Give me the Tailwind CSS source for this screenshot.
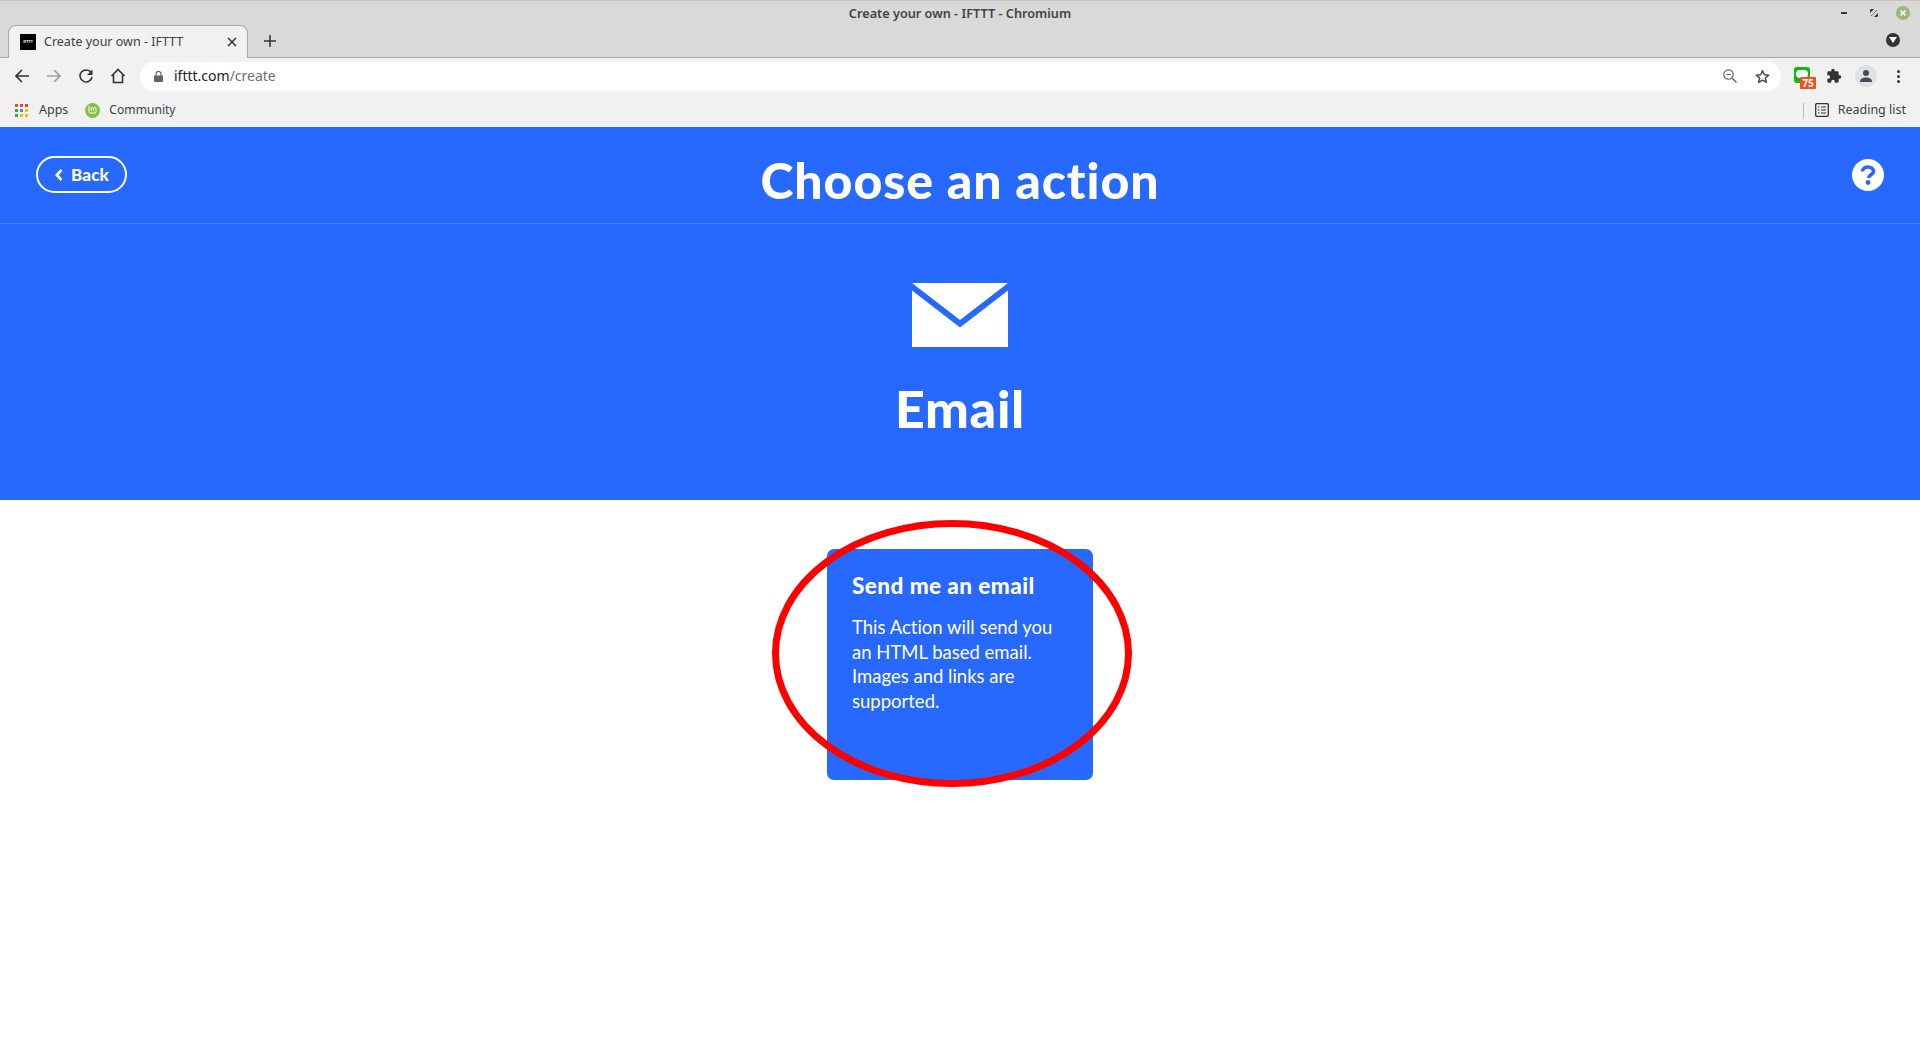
<!DOCTYPE html>
<html><head><meta charset="utf-8"><title>Create your own - IFTTT</title>
<script src="https://cdn.jsdelivr.net/npm/@tailwindcss/browser@4"></script></head>
<body class="bg-white overflow-hidden font-['Noto_Sans',sans-serif]">
<div class="h-[1039px] w-[1920px] flex flex-col relative">
  <!-- title + tabs -->
  <div class="h-[58px] bg-[#d9d9d9] border-t border-[#c4c4c4] border-b border-b-[#a8a8a8] relative flex flex-col shrink-0">
    <div class="h-[23px] pt-[3px] flex items-center justify-center text-[12.700px] font-semibold text-[#444] relative">Create your own - IFTTT - Chromium
      <div class="absolute right-[9px] top-[5px] flex items-center gap-[19px]">
        <div class="w-[6px] h-[2px] bg-[#333] mr-[4px]"></div>
        <svg width="8" height="8" viewBox="0 0 8 8"><path d="M0 4L4 0H1L0 1ZM8 4L4 8H7L8 7Z" fill="#333"/><path d="M1 7L7 1" stroke="#333" stroke-width=".6"/></svg>
        <svg class="-ml-[1px] mr-[1px]" width="14" height="14" viewBox="0 0 14 14"><circle cx="7" cy="7" r="7" fill="#9ab87a"/><path d="M4.500 4.500L9.500 9.500M9.500 4.500L4.500 9.500" stroke="#fff" stroke-width="1.600"/></svg>
      </div>
    </div>
    <div class="flex items-end h-[34px] pl-[8px]">
      <div class="w-[240px] h-[33px] -mb-px bg-[#f1f1f1] border border-b-0 border-[#a8a8a8] rounded-t-[8px] flex items-center pl-[11px] pr-[10px] text-[12.500px] text-[#3c4043]">
        <div class="w-[16px] h-[16px] bg-black flex items-center justify-center mr-[8px]"><span class="text-white text-[3.500px] font-bold leading-none">IFTTT</span></div>
        <span class="flex-1">Create your own - IFTTT</span>
        <svg width="10" height="10" viewBox="0 0 10 10"><path d="M1 1L9 9M9 1L1 9" stroke="#333" stroke-width="1.500"/></svg>
      </div>
      <svg class="ml-[16px] mb-[10px]" width="12" height="12" viewBox="0 0 12 12"><path d="M6 0V12M0 6H12" stroke="#333" stroke-width="1.500"/></svg>
      <div class="ml-auto mr-[20px] mb-[10px] w-[14px] h-[14px] rounded-full bg-[#333] flex items-center justify-center"><svg width="8" height="6" viewBox="0 0 8 6"><path d="M0 0H8L4 6Z" fill="#fff"/></svg></div>
    </div>
  </div>
  <!-- toolbar -->
  <div class="h-[37px] pb-[1px] bg-[#f1f1f1] flex items-center shrink-0 pl-[15px] pr-[14px]">
    <svg width="14" height="14" viewBox="0 0 14 14"><path d="M14 7H1.500M7 1L1 7L7 13" fill="none" stroke="#333" stroke-width="1.600"/></svg>
    <svg class="ml-[18px]" width="14" height="14" viewBox="0 0 14 14"><path d="M0 7H12.500M7 1L13 7L7 13" fill="none" stroke="#a0a0a0" stroke-width="1.600"/></svg>
    <svg class="ml-[18px]" width="14" height="14" viewBox="0 0 14 14"><path d="M12 3.500A6 6 0 1 0 13 8" fill="none" stroke="#333" stroke-width="1.600"/><path d="M13.500 0.500V6H8Z" fill="#333"/></svg>
    <svg class="ml-[17px]" width="16" height="16" viewBox="0 0 16 16"><path d="M1.500 8L8 1.500L14.500 8M3.500 7V14.500H12.500V7" fill="none" stroke="#333" stroke-width="1.600"/></svg>
    <div class="ml-[14px] w-[1641px] h-[29px] bg-white rounded-full flex items-center pl-[14px] pr-[11px] shrink-0">
      <svg width="9" height="11" viewBox="0 0 9 11"><path d="M2 5V3a2.500 2.500 0 0 1 5 0V5" fill="none" stroke="#5f6368" stroke-width="1.200"/><rect y="4.500" width="9" height="6.500" rx="1" fill="#5f6368"/></svg>
      <span class="ml-[11px] -mt-[1px] text-[14px] text-[#202124]">ifttt.com<span class="text-[#6b6f73]">/create</span></span>
      <svg class="ml-auto" width="14" height="14" viewBox="0 0 14 14"><circle cx="5.500" cy="5.500" r="4.700" fill="none" stroke="#666" stroke-width="1.200"/><path d="M9 9L13.500 13.500" stroke="#666" stroke-width="1.500"/><path d="M3.300 5.500H7.700" stroke="#666"/></svg>
      <svg class="ml-[18px]" width="15" height="15" viewBox="0 0 24 24"><path d="M12 2.500L14.800 9.200L22 9.800L16.500 14.500L18.200 21.500L12 17.800L5.800 21.500L7.500 14.500L2 9.800L9.200 9.200Z" fill="none" stroke="#444" stroke-width="2.200" stroke-linejoin="round"/></svg>
    </div>
    <div class="ml-[13px] -mt-[3px] relative w-[16px] h-[16px] bg-[#10b90f] rounded-[3px] shrink-0">
      <div class="absolute left-[2px] top-[3px] w-[12px] h-[8px] rounded-full bg-white"></div>
      <div class="absolute left-[6px] top-[10px] w-[16px] h-[12px] bg-[#f4511e] rounded-[1px] text-white text-[10px] font-bold leading-[12px] text-center">75</div>
    </div>
    <svg class="ml-[16px] shrink-0" width="16" height="16" viewBox="0 0 24 24"><path d="M20.500 11H19V7a2 2 0 0 0-2-2h-4V3.500a2.500 2.500 0 0 0-5 0V5H4a2 2 0 0 0-2 2v3.800h1.500a2.700 2.700 0 0 1 0 5.400H2V20a2 2 0 0 0 2 2h3.800v-1.500a2.700 2.700 0 0 1 5.400 0V22H17a2 2 0 0 0 2-2v-4h1.500a2.500 2.500 0 0 0 0-5z" fill="#333"/></svg>
    <div class="ml-[13px] w-[22px] h-[22px] rounded-full bg-[#dfe1e5] flex items-center justify-center shrink-0"><svg width="14" height="14" viewBox="0 0 14 14"><circle cx="7" cy="4" r="3" fill="#454b54"/><path d="M1 13C1 9.500 4 8.500 7 8.500S13 9.500 13 13Z" fill="#454b54"/></svg></div>
    <div class="ml-[20px] flex flex-col gap-[2px] shrink-0"><i class="block w-[3px] h-[3px] rounded-full bg-[#333]"></i><i class="block w-[3px] h-[3px] rounded-full bg-[#333]"></i><i class="block w-[3px] h-[3px] rounded-full bg-[#333]"></i></div>
  </div>
  <!-- bookmarks -->
  <div class="h-[32px] pb-[2px] bg-[#f1f1f1] flex items-center shrink-0 pl-[15px] pr-[14px] text-[12.500px] text-[#3c4043]">
    <div class="grid grid-cols-3 gap-[2px] w-[13px] h-[13px]">
      <i class="block bg-[#ea4335]"></i><i class="block bg-[#ea4335]"></i><i class="block bg-[#ea4335]"></i>
      <i class="block bg-[#34a853]"></i><i class="block bg-[#4285f4]"></i><i class="block bg-[#fbbc05]"></i>
      <i class="block bg-[#34a853]"></i><i class="block bg-[#fbbc05]"></i><i class="block bg-[#fbbc05]"></i>
    </div>
    <span class="ml-[11px]">Apps</span>
    <div class="ml-[17px] w-[15px] h-[15px] rounded-full bg-[#87c13f] flex items-center justify-center"><svg width="9" height="8" viewBox="0 0 9 8"><path d="M1 0V5.500Q1 7 2.500 7H6.500Q8 7 8 5.500V2.500Q8 1.500 7 1.500T5.500 2.500V5M3.200 5V2.500Q3.200 1.500 4.300 1.500T5.500 2.500" fill="none" stroke="#fff" stroke-width="1"/></svg></div>
    <span class="ml-[9px] text-[12.100px]">Community</span>
    <div class="ml-auto w-px h-[15px] bg-[#bbb] mr-[11px]"></div>
    <svg width="14" height="14" viewBox="0 0 14 14"><rect x=".7" y=".7" width="12.600" height="12.600" rx="1" fill="none" stroke="#333" stroke-width="1.300"/><path d="M3 4H4.500M6 4H11M3 7H4.500M6 7H11M3 10H4.500M6 10H11" stroke="#333" stroke-width="1.200"/></svg>
    <span class="ml-[9px]">Reading list</span>
  </div>
  <!-- page header -->
  <div class="bg-[#2768ff] h-[373px] shrink-0 font-['Lato',sans-serif] text-white flex flex-col [font-variant-ligatures:none]">
    <div class="h-[97px] border-b border-white/20 flex items-center justify-between pl-[36px] pr-[36px] relative shrink-0">
      <div class="w-[91px] h-[37px] border-2 border-white rounded-full flex items-center justify-center gap-[8px] -mt-[1px] pl-[1px]">
        <svg width="8" height="12" viewBox="0 0 8 12"><path d="M6.500 1L1.800 6L6.500 11" fill="none" stroke="#fff" stroke-width="2.600"/></svg>
        <span class="text-[17px] font-black leading-none tracking-[0.2px]">Back</span>
      </div>
      <h1 class="absolute left-0 right-0 text-center text-[50px] font-black leading-none top-[28px] tracking-[0.9px]">Choose an action</h1>
      <svg class="-mt-[1px]" width="32" height="32" viewBox="0 0 32 32"><circle cx="16" cy="16" r="16" fill="#fff"/><path d="M10.500 12.500C10.500 9.500 13 8 16 8S21.500 9.800 21.500 12.500C21.500 15.500 17 15.500 16.500 19" fill="none" stroke="#2768ff" stroke-width="3.600"/><circle cx="16" cy="23.500" r="2.400" fill="#2768ff"/></svg>
    </div>
    <div class="flex flex-col items-center pt-[59px]">
      <svg width="96" height="64" viewBox="0 0 96 64"><path d="M0 0H96L48 37Z M0 7.500L48 44.500L96 7.500V64H0Z" fill="#fff"/></svg>
      <h2 class="text-[52px] font-black leading-none mt-[35px] tracking-[0.7px]">Email</h2>
    </div>
  </div>
  <!-- body -->
  <div class="flex-1 flex justify-center pt-[49px] font-['Lato',sans-serif] [font-variant-ligatures:none]">
    <div class="w-[266px] h-[231px] bg-[#2768ff] rounded-[7px] px-[25px] pt-[24px] text-white">
      <h3 class="text-[22.500px] font-black leading-[26px] tracking-[0.45px]">Send me an email</h3>
      <p class="mt-[16px] text-[18.500px] leading-[24.700px]">This Action will send you an HTML based email. Images and links are supported.</p>
    </div>
  </div>
  <!-- annotation -->
  <svg class="absolute left-[772px] top-[520px] pointer-events-none" width="360" height="267" viewBox="0 0 360 267"><ellipse cx="180" cy="133.500" rx="176.500" ry="130" fill="none" stroke="#ff0000" stroke-width="7"/></svg>
</div>
</body></html>
